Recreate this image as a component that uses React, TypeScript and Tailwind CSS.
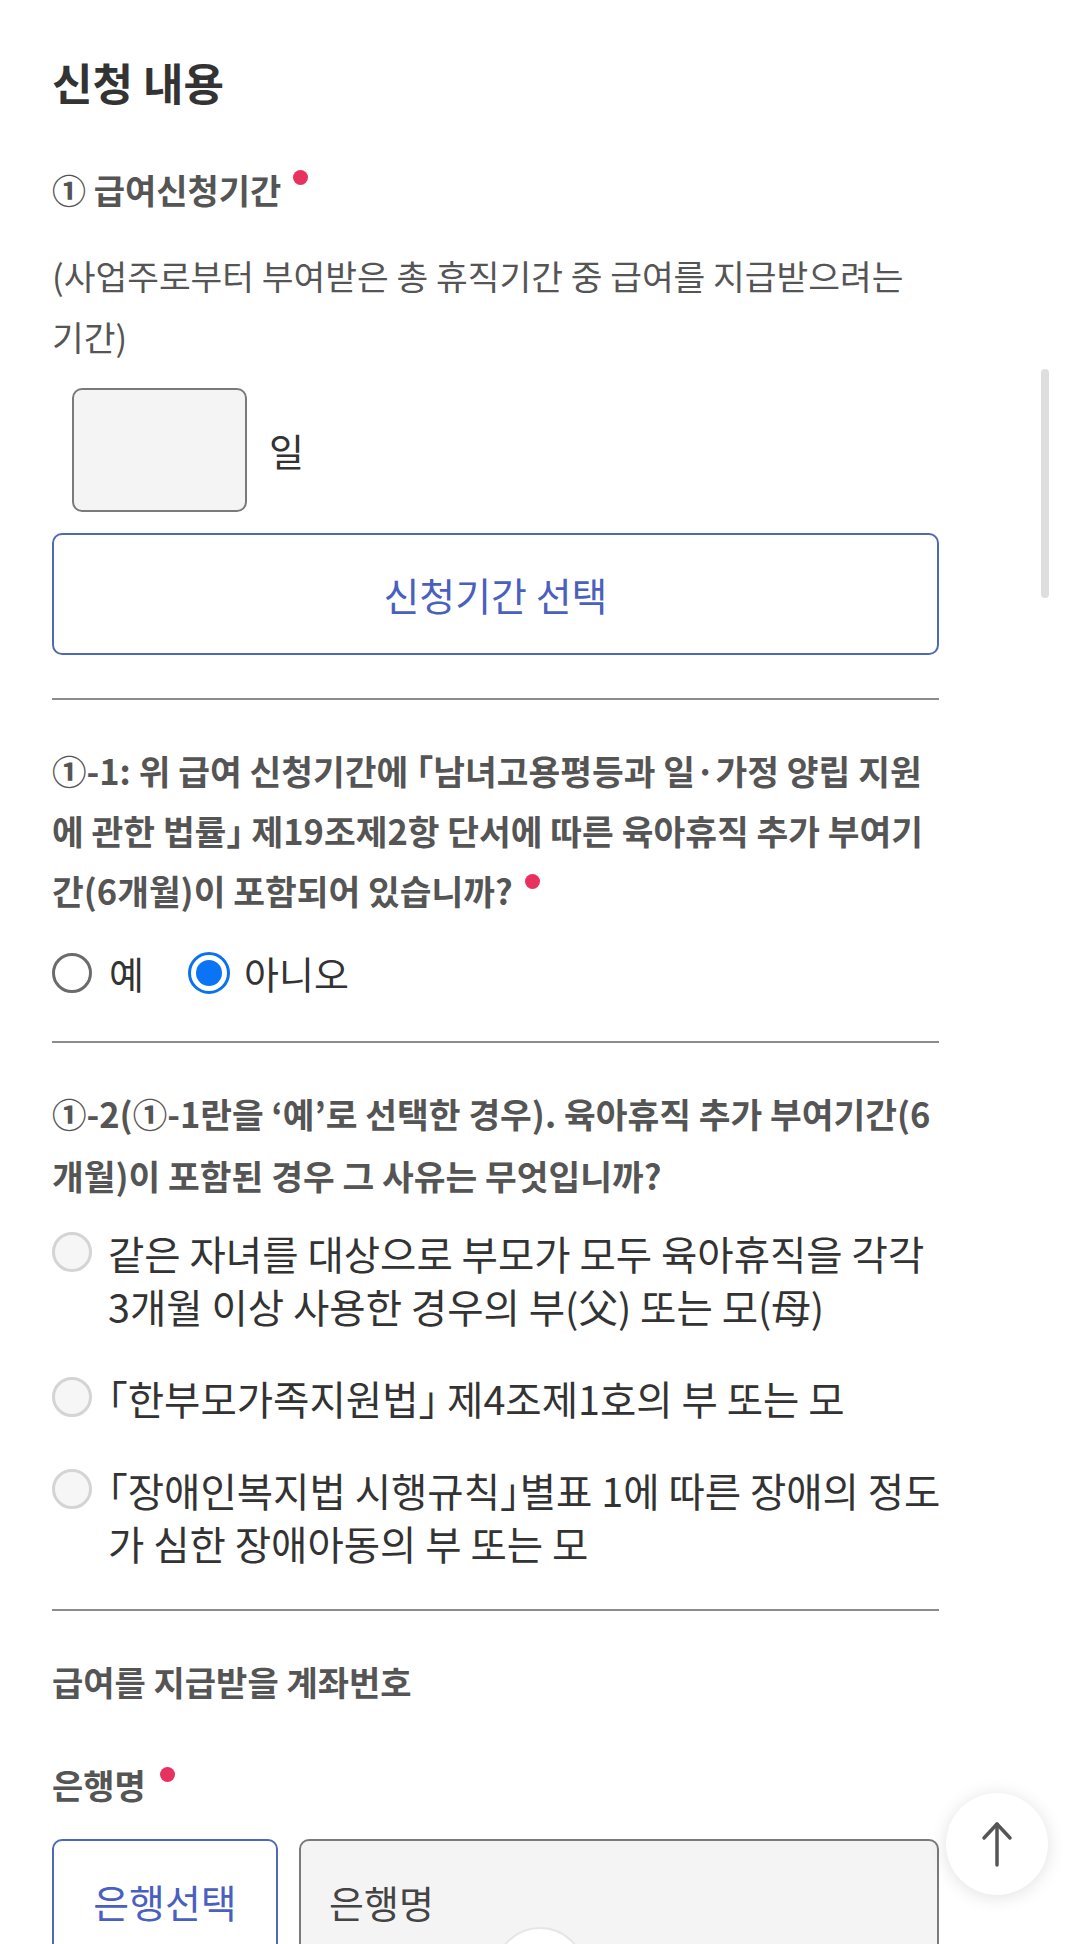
import React from "react";

const Dot = ({ className = "" }: { className?: string }) => (
  <span className={`inline-block w-[15px] h-[15px] rounded-full bg-[#e8315e] align-top ${className}`} />
);

// half-width CJK punctuation, like the reference font draws it
const P = ({ children }: { children: React.ReactNode }) => (
  <span className="[font-feature-settings:'halt']">{children}</span>
);

const Radio = ({ checked = false, disabled = false }: { checked?: boolean; disabled?: boolean }) => {
  if (checked) {
    return (
      <span className="flex h-[42px] w-[42px] shrink-0 items-center justify-center rounded-full border-[3px] border-[#0b72ee] bg-white">
        <span className="h-[26px] w-[26px] rounded-full bg-[#0b74f4]" />
      </span>
    );
  }
  return (
    <span
      className={
        disabled
          ? "block h-[40px] w-[40px] shrink-0 rounded-full border-[3px] border-[#d4d4d4] bg-[#f6f6f6]"
          : "block h-[40px] w-[40px] shrink-0 rounded-full border-[3px] border-[#6b6b6b] bg-white"
      }
    />
  );
};

const reasons: React.ReactNode[][] = [
  ["같은 자녀를 대상으로 부모가 모두 육아휴직을 각각", "3개월 이상 사용한 경우의 부(父) 또는 모(母)"],
  [<><P>「</P>한부모가족지원법<P>」</P> 제4조제1호의 부 또는 모</>],
  [<><P>「</P>장애인복지법 시행규칙<P>」</P>별표 1에 따른 장애의 정도</>, "가 심한 장애아동의 부 또는 모"],
];

export default function App() {
  return (
    <div className="relative h-[1944px] w-[1080px] overflow-hidden bg-white font-['Noto_Sans_CJK_KR','Noto_Sans',sans-serif]">
      <div className="ml-[52px] w-[887px] pt-[54px]">
        <h2 className="text-[44px] font-bold leading-[56px] text-[#333]">신청 내용</h2>

        <div className="mt-[56px] text-[34px] font-bold leading-[48px] text-[#555]">
          ① 급여신청기간
          <Dot className="ml-[12px] mt-[4px]" />
        </div>

        <p className="mt-[31px] whitespace-nowrap text-[34.5px] leading-[61px] text-[#555]">
          (사업주로부터 부여받은 총 휴직기간 중 급여를 지급받으려는
          <br />
          기간)
        </p>

        <div className="ml-[20px] mt-[21px] flex items-center gap-[22px]">
          <div className="h-[124px] w-[175px] rounded-[10px] border-2 border-[#7a7a7a] bg-[#f4f4f4]" />
          <span className="text-[38px] leading-none text-[#333]">일</span>
        </div>

        <button className="mt-[21px] flex h-[122px] w-full items-center justify-center rounded-[10px] border-2 border-[#5068b8] bg-white text-[39px] text-[#4a60c0]">
          신청기간 선택
        </button>

        <div className="mt-[43px] h-[2px] bg-[#8c8c8c]" />

        <div className="mt-[40px] whitespace-nowrap text-[34.5px] font-bold leading-[60px] text-[#555]">
          <div>
            ①-1: 위 급여 신청기간에 <P>「</P>남녀고용평등과 일<P>·</P>가정 양립 지원
          </div>
          <div>
            에 관한 법률<P>」</P> 제19조제2항 단서에 따른 육아휴직 추가 부여기
          </div>
          <div>
            간(6개월)이 포함되어 있습니까?
            <Dot className="ml-[12px] mt-[14px]" />
          </div>
        </div>

        <div className="mt-[29px] flex h-[48px] items-center">
          <Radio />
          <span className="ml-[17px] text-[38px] leading-none text-[#333]">예</span>
          <span className="ml-[44px]">
            <Radio checked />
          </span>
          <span className="ml-[14px] text-[38px] leading-none text-[#333]">아니오</span>
        </div>

        <div className="mt-[44px] h-[2px] bg-[#8c8c8c]" />

        <div className="mt-[39px] whitespace-nowrap text-[34.5px] font-bold leading-[62px] text-[#555]">
          <div>①-2(①-1란을 ‘예’로 선택한 경우). 육아휴직 추가 부여기간(6</div>
          <div>개월)이 포함된 경우 그 사유는 무엇입니까?</div>
        </div>

        <div className="mt-[20px] flex flex-col gap-[39px]">
          {reasons.map((lines, i) => (
            <div key={i} className="flex items-start">
              <span className="mt-[6px]">
                <Radio disabled />
              </span>
              <div className="ml-[16px] whitespace-nowrap text-[39.5px] leading-[53px] text-[#333]">
                {lines.map((l, j) => (
                  <div key={j}>{l}</div>
                ))}
              </div>
            </div>
          ))}
        </div>

        <div className="mt-[40px] h-[2px] bg-[#8c8c8c]" />

        <div className="mt-[47px] text-[34px] font-bold leading-[48px] text-[#555]">급여를 지급받을 계좌번호</div>

        <div className="mt-[55px] text-[34px] font-bold leading-[48px] text-[#555]">
          은행명
          <Dot className="ml-[14px] mt-[6px]" />
        </div>

        <div className="mt-[30px] flex gap-[21px]">
          <button className="flex h-[124px] w-[226px] items-center justify-center rounded-[10px] border-2 border-[#5068b8] bg-white text-[39px] text-[#4a60c0]">
            은행선택
          </button>
          <div className="flex h-[124px] flex-1 items-center rounded-[10px] border-2 border-[#7a7a7a] bg-[#f4f4f4] pl-[28px] text-[38px] text-[#444]">
            은행명
          </div>
        </div>
      </div>

      {/* scrollbar thumb */}
      <div className="absolute left-[1041px] top-[369px] h-[229px] w-[8px] rounded-full bg-[#dedede]" />

      {/* scroll-to-top */}
      <button className="absolute left-[946px] top-[1793px] flex h-[102px] w-[102px] items-center justify-center rounded-full bg-white shadow-[0_2px_18px_rgba(0,0,0,0.12)]">
        <svg width="32" height="46" viewBox="0 0 32 46" fill="none" stroke="#555" strokeWidth="3.5" strokeLinecap="round" strokeLinejoin="round">
          <path d="M16 3v41" />
          <path d="M3 17 16 3l13 14" />
        </svg>
      </button>

      {/* partial spinner circle */}
      <div className="absolute left-[494px] top-[1927px] h-[92px] w-[92px] rounded-full border-2 border-[#e6e6e6] bg-white" />
    </div>
  );
}
